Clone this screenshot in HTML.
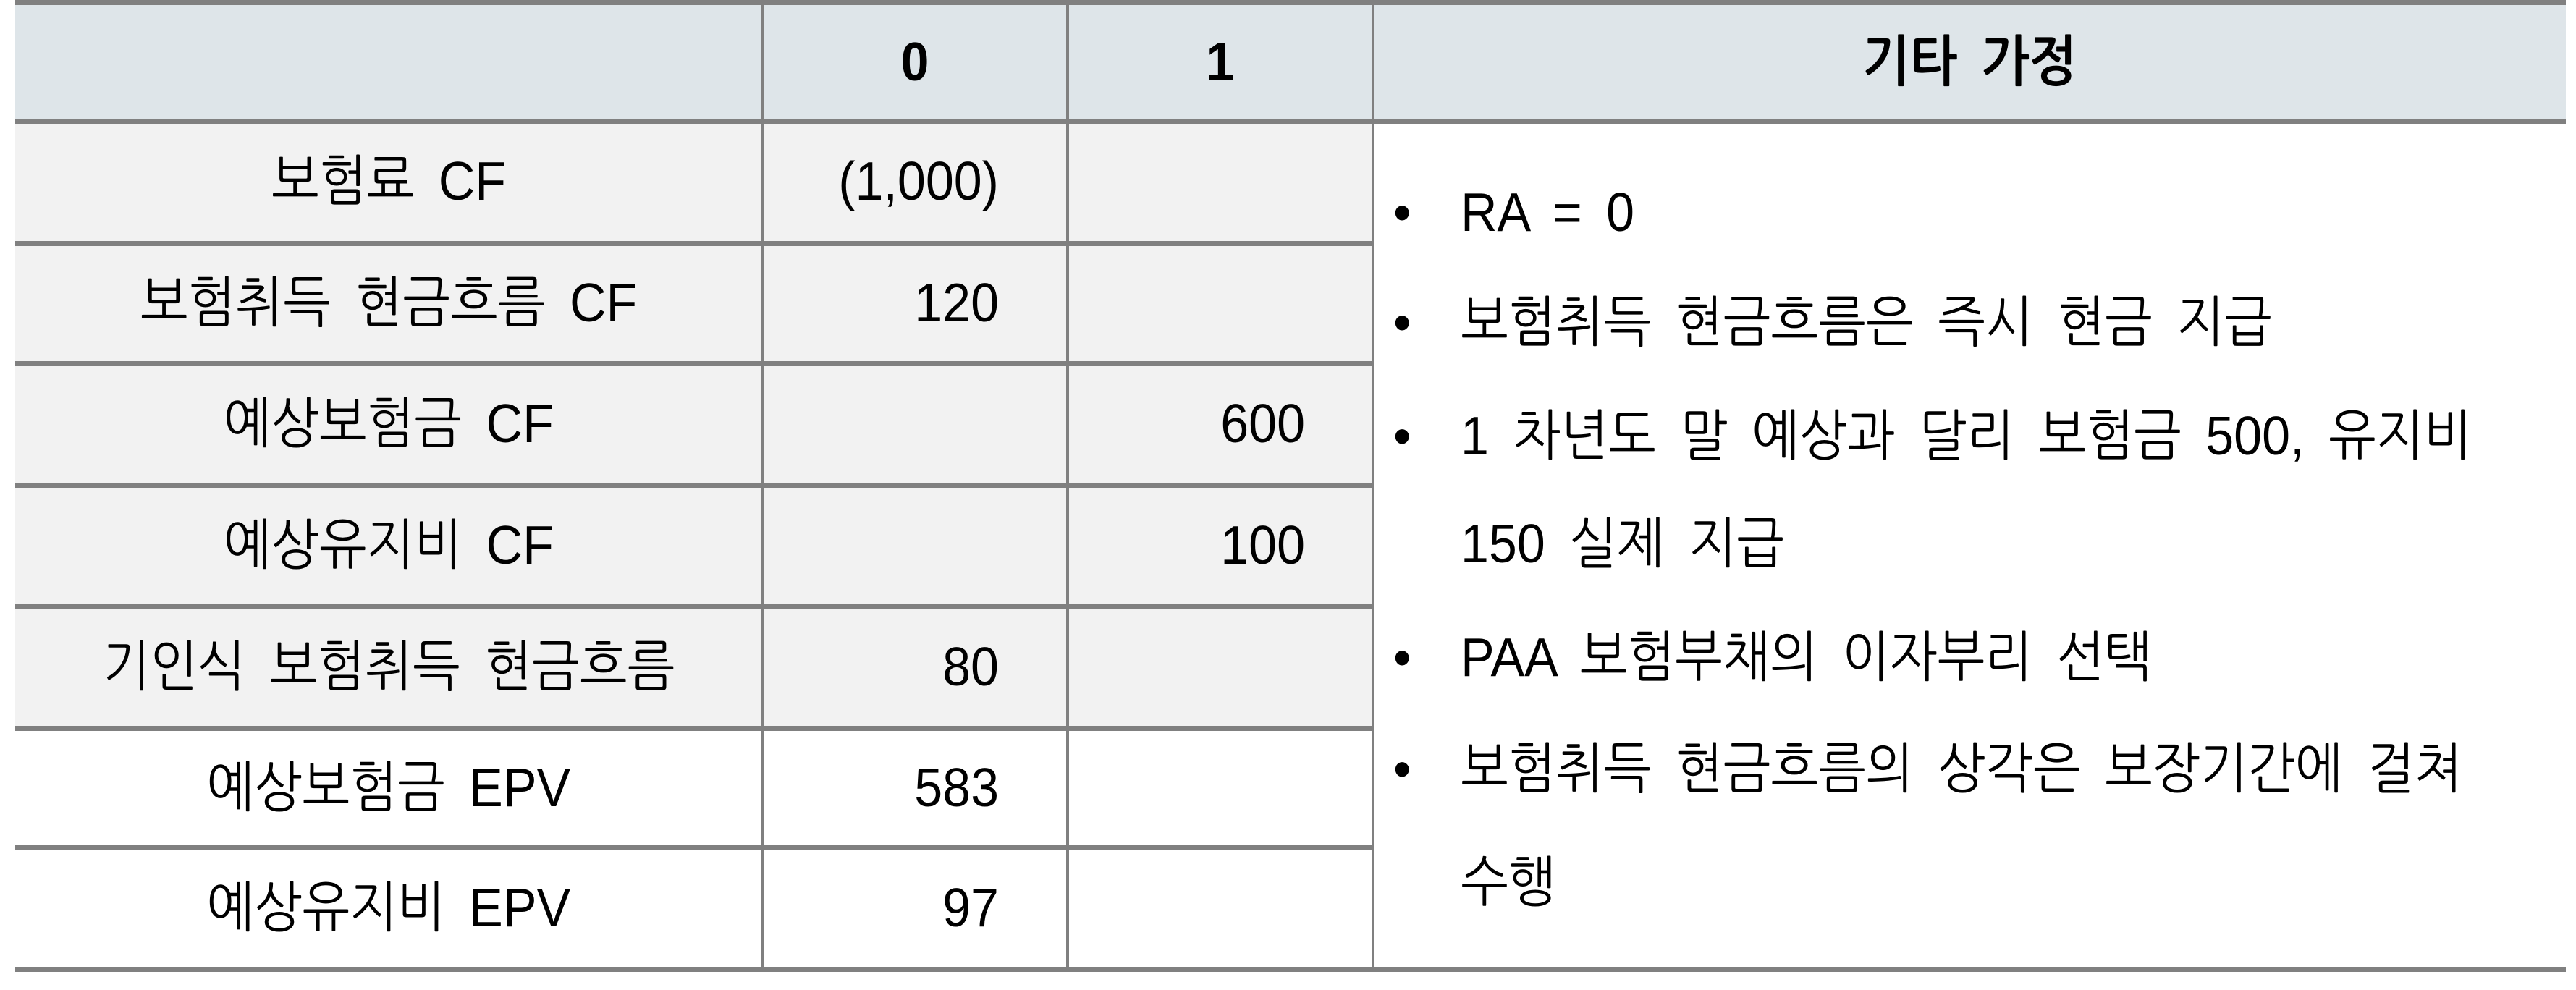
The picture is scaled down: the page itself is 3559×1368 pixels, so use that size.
<!DOCTYPE html>
<html><head><meta charset="utf-8"><style>
html,body{margin:0;padding:0;background:#fff;}
body{width:3559px;height:1368px;position:relative;overflow:hidden;font-family:"Liberation Sans","NanumGothic","Noto Sans CJK KR",sans-serif;color:#000;}
.a{position:absolute;}
.h{background:#808080;height:7px;left:21px;width:3524px;}
.v{background:#808080;width:4px;}
.t{font-size:70px;line-height:1;white-space:nowrap;transform:scaleY(1.08);word-spacing:14px;}
.c{text-align:center;}
.r{text-align:right;}
.b{font-weight:bold;}
</style></head><body>
<div class="a" style="left:21px;top:6px;width:3524px;height:162px;background:#dee5e9"></div>
<div class="a" style="left:21px;top:168px;width:1876px;height:838px;background:#f2f2f2"></div>
<div class="a h" style="top:0"></div>
<div class="a h" style="top:165px"></div>
<div class="a h" style="top:333px;width:1876px"></div>
<div class="a h" style="top:499px;width:1876px"></div>
<div class="a h" style="top:667px;width:1876px"></div>
<div class="a h" style="top:835px;width:1876px"></div>
<div class="a h" style="top:1003px;width:1876px"></div>
<div class="a h" style="top:1168px;width:1876px"></div>
<div class="a h" style="top:1336px"></div>
<div class="a v" style="left:1051px;top:0;height:1340px"></div>
<div class="a v" style="left:1473px;top:0;height:1340px"></div>
<div class="a v" style="left:1895px;top:0;height:1340px"></div>

<div class="a t c b" style="left:1053px;width:422px;top:50px">0</div>
<div class="a t c b" style="left:1475px;width:422px;top:50px">1</div>
<div class="a t c b" style="left:1897px;width:1648px;top:50px">기타 가정</div>

<div class="a t c" style="left:21px;width:1032px;top:215px">보험료 CF</div>
<div class="a t c" style="left:21px;width:1032px;top:383px">보험취득 현금흐름 CF</div>
<div class="a t c" style="left:21px;width:1032px;top:550px">예상보험금 CF</div>
<div class="a t c" style="left:21px;width:1032px;top:718px">예상유지비 CF</div>
<div class="a t c" style="left:21px;width:1032px;top:886px">기인식 보험취득 현금흐름</div>
<div class="a t c" style="left:21px;width:1032px;top:1053px">예상보험금 EPV</div>
<div class="a t c" style="left:21px;width:1032px;top:1219px">예상유지비 EPV</div>

<div class="a t r" style="left:1053px;width:327px;top:215px">(1,000)</div>
<div class="a t r" style="left:1053px;width:327px;top:383px">120</div>
<div class="a t r" style="left:1475px;width:328px;top:550px">600</div>
<div class="a t r" style="left:1475px;width:328px;top:718px">100</div>
<div class="a t r" style="left:1053px;width:327px;top:886px">80</div>
<div class="a t r" style="left:1053px;width:327px;top:1053px">583</div>
<div class="a t r" style="left:1053px;width:327px;top:1219px">97</div>

<div class="a t" style="left:1925px;top:258px">•</div>
<div class="a t" style="left:2018px;top:258px">RA = 0</div>
<div class="a t" style="left:1925px;top:410px">•</div>
<div class="a t" style="left:2018px;top:410px">보험취득 현금흐름은 즉시 현금 지급</div>
<div class="a t" style="left:1925px;top:567px">•</div>
<div class="a t" style="left:2018px;top:567px">1 차년도 말 예상과 달리 보험금 500, 유지비</div>
<div class="a t" style="left:2018px;top:716px">150 실제 지급</div>
<div class="a t" style="left:1925px;top:873px">•</div>
<div class="a t" style="left:2018px;top:873px">PAA 보험부채의 이자부리 선택</div>
<div class="a t" style="left:1925px;top:1027px">•</div>
<div class="a t" style="left:2018px;top:1027px">보험취득 현금흐름의 상각은 보장기간에 걸쳐</div>
<div class="a t" style="left:2018px;top:1184px">수행</div>
</body></html>
